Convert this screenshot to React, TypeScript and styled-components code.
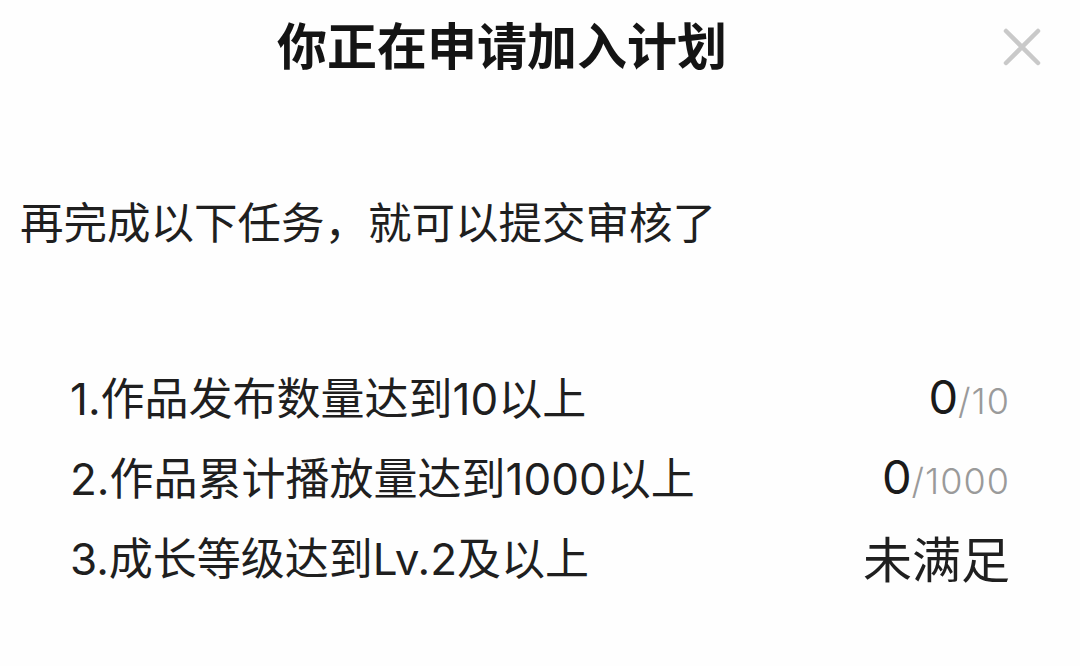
import styled, {createGlobalStyle} from "styled-components";

const GlobalStyle = createGlobalStyle`
    html, body {
        margin: 0;
        padding: 0;
        background-color: #fefefe;
    }

    body {
        font-family: Inter, "Noto Sans CJK SC", sans-serif;
        color: #1f1f1f;
    }
`

type Task = {
    label: string
    done?: number
    total?: number
    status?: string
}

const tasks: Task[] = [
    {label: "1.作品发布数量达到10以上", done: 0, total: 10},
    {label: "2.作品累计播放量达到1000以上", done: 0, total: 1000},
    {label: "3.成长等级达到Lv.2及以上", status: "未满足"},
]

const App = () => {
    return (
        <>
            <GlobalStyle/>
            <Sheet>
                <Header>
                    <Title>你正在申请加入计划</Title>
                    <CloseBtn type={"button"} aria-label={"关闭"}>
                        <svg width="40" height="40" viewBox="0 0 40 40">
                            <path d="M4 4 L36 36 M36 4 L4 36" stroke="#c9c9c9" strokeWidth="4.5"
                                  strokeLinecap="round"/>
                        </svg>
                    </CloseBtn>
                </Header>

                <Subtitle>再完成以下任务，就可以提交审核了</Subtitle>

                <TaskList>
                    {tasks.map((task) => (
                        <TaskRow key={task.label}>
                            <TaskLabel>{task.label}</TaskLabel>
                            {task.status ? (
                                <Status>{task.status}</Status>
                            ) : (
                                <Progress>
                                    <Current>{task.done}</Current>
                                    <Total>/{task.total}</Total>
                                </Progress>
                            )}
                        </TaskRow>
                    ))}
                </TaskList>
            </Sheet>
        </>
    )
}

export default App

const Sheet = styled.div`
    width: 1080px;
    height: 666px;
    display: flex;
    flex-direction: column;
    background-color: #fefefe;
    overflow: hidden;
`

const Header = styled.div`
    position: relative;
    height: 86px;
    display: flex;
    align-items: center;
    justify-content: center;
    padding-right: 76px;
`

const Title = styled.h1`
    margin: 0;
    font-family: "Noto Sans CJK SC", sans-serif;
    font-size: 50px;
    font-weight: 700;
    line-height: 86px;
    color: #141414;
`

const CloseBtn = styled.button`
    position: absolute;
    top: 27px;
    right: 38px;
    width: 40px;
    height: 40px;
    padding: 0;
    border: none;
    background: none;
    display: flex;
    cursor: pointer;
`

const Subtitle = styled.p`
    margin: 105px 0 0;
    padding-left: 20px;
    font-family: "Noto Sans CJK SC", sans-serif;
    font-size: 43.5px;
    line-height: 60px;
    color: #1f1f1f;
`

const TaskList = styled.div`
    margin-top: 105px;
    padding: 0 70px 0 70px;
    display: flex;
    flex-direction: column;
`

const TaskRow = styled.div`
    height: 80px;
    display: flex;
    align-items: center;
    justify-content: space-between;
`

const TaskLabel = styled.span`
    font-size: 44px;
    color: #1f1f1f;
`

const Progress = styled.span`
    display: flex;
    align-items: baseline;
`

const Current = styled.span`
    font-size: 47px;
    font-weight: 400;
    color: #1a1a1a;
`

const Total = styled.span`
    font-size: 36px;
    font-weight: 300;
    letter-spacing: 1px;
    color: #9a9a9a;
`

const Status = styled.span`
    font-size: 49px;
    color: #1f1f1f;
`
